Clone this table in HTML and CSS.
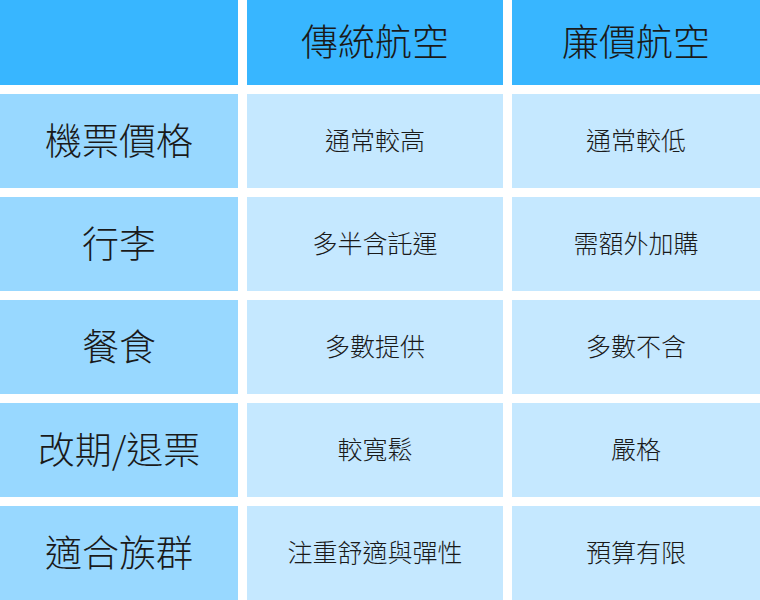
FILE: index.html
```html
<!DOCTYPE html>
<html lang="zh-Hant">
<head>
<meta charset="utf-8">
<link rel="stylesheet" href="styles.css">
</head>
<body>
<div class="table">
  <div class="cell head"></div>
  <div class="cell head">傳統航空</div>
  <div class="cell head">廉價航空</div>

  <div class="cell label">機票價格</div>
  <div class="cell data">通常較高</div>
  <div class="cell data">通常較低</div>

  <div class="cell label">行李</div>
  <div class="cell data">多半含託運</div>
  <div class="cell data">需額外加購</div>

  <div class="cell label">餐食</div>
  <div class="cell data">多數提供</div>
  <div class="cell data">多數不含</div>

  <div class="cell label">改期/退票</div>
  <div class="cell data">較寬鬆</div>
  <div class="cell data">嚴格</div>

  <div class="cell label">適合族群</div>
  <div class="cell data">注重舒適與彈性</div>
  <div class="cell data">預算有限</div>
</div>
</body>
</html>
```
FILE: styles.css
```css
html, body {
  margin: 0;
  padding: 0;
  background: #ffffff;
}
body {
  width: 760px;
  height: 600px;
  overflow: hidden;
  font-family: "Noto Sans CJK TC", "Noto Sans", sans-serif;
  font-weight: 300;
  color: #1a1a1a;
}
.table {
  display: grid;
  grid-template-columns: 238px 256px 1fr;
  grid-template-rows: 85px repeat(5, 94px);
  column-gap: 9px;
  row-gap: 9px;
  width: 760px;
}
.cell {
  display: flex;
  align-items: center;
  justify-content: center;
  white-space: nowrap;
  padding-bottom: 5px;
  box-sizing: border-box;
}
.head {
  background: #38b6ff;
  font-size: 37px;
}
.label {
  background: #98d8ff;
  font-size: 37px;
}
.data {
  background: #c5e8ff;
  font-size: 25px;
}
```
